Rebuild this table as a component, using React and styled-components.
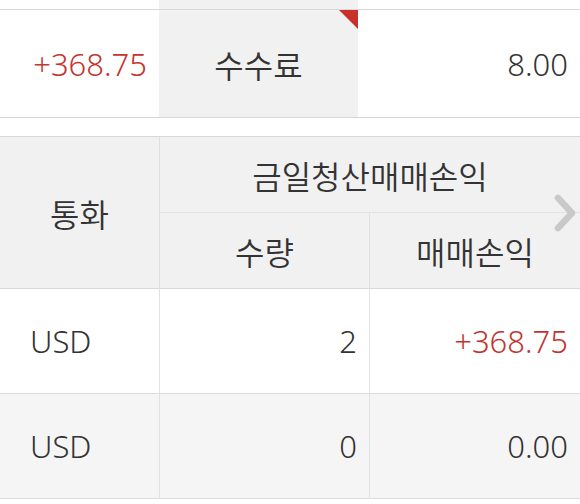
import styled, { createGlobalStyle } from "styled-components";

const Global = createGlobalStyle`
  html, body {
    margin: 0;
    padding: 0;
    background: #ffffff;
  }
  body {
    font-family: "Noto Sans", "Noto Sans CJK KR", sans-serif;
    font-weight: 300;
    color: #333333;
  }
`;

const Page = styled.div`
  width: 580px;
  display: flex;
  flex-direction: column;
`;

const SummaryTable = styled.div`
  display: grid;
  grid-template-columns: 159px 199px 1fr;
`;

const SummaryCell = styled.div`
  position: relative;
  height: ${(p) => p.$h}px;
  background: ${(p) => (p.$label ? "#f1f1f1" : "#ffffff")};
  border-bottom: 1px solid #d8d8d8;
  display: flex;
  align-items: center;
  justify-content: ${(p) => (p.$label ? "center" : "flex-end")};
  padding: 0 12px;
  box-sizing: border-box;
  font-size: ${(p) => (p.$label ? 32 : 31)}px;
  font-weight: ${(p) => (p.$label ? 350 : 300)};
  color: ${(p) => (p.$red ? "#c2352f" : "#333333")};
`;

const Flag = styled.span`
  position: absolute;
  top: 0;
  right: 0;
  width: 0;
  height: 0;
  border-top: 19px solid #c8302a;
  border-left: 19px solid transparent;
`;

const Gap = styled.div`
  height: 18px;
`;

const Table = styled.div`
  position: relative;
  display: grid;
  grid-template-columns: 160px 210px 1fr;
  border-top: 1px solid #d8d8d8;
`;

const HeadCell = styled.div`
  grid-column: ${(p) => p.$col || "auto"};
  grid-row: ${(p) => p.$row || "auto"};
  background: #f1f1f1;
  display: flex;
  align-items: center;
  justify-content: center;
  font-size: 32px;
  font-weight: 350;
  color: #333333;
  box-sizing: border-box;
  height: ${(p) => p.$h}px;
  border-bottom: 1px solid ${(p) => p.$line || "#e2e2e2"};
  border-right: ${(p) => (p.$divide ? "1px solid #e0e0e0" : "none")};
`;

const Cell = styled.div`
  height: 105px;
  box-sizing: border-box;
  display: flex;
  align-items: center;
  justify-content: ${(p) => (p.$left ? "flex-start" : "flex-end")};
  padding: ${(p) => (p.$left ? "0 0 0 30px" : "0 12px 0 0")};
  background: ${(p) => (p.$alt ? "#f5f5f5" : "#ffffff")};
  border-bottom: 1px solid #dcdcdc;
  border-right: ${(p) => (p.$divide ? "1px solid #e2e2e2" : "none")};
  font-size: 31px;
  color: ${(p) => (p.$red ? "#c2352f" : "#333333")};
`;

const Chevron = styled.svg`
  position: absolute;
  right: 1px;
  top: 56px;
`;

const rows = [
  { cur: "USD", qty: "2", pl: "+368.75", red: true },
  { cur: "USD", qty: "0", pl: "0.00", red: false },
];

export default function App() {
  return (
    <Page>
      <Global />
      <SummaryTable>
        <SummaryCell $h={10} />
        <SummaryCell $h={10} $label />
        <SummaryCell $h={10} />
        <SummaryCell $h={108} $red>
          +368.75
        </SummaryCell>
        <SummaryCell $h={108} $label>
          수수료
          <Flag />
        </SummaryCell>
        <SummaryCell $h={108}>8.00</SummaryCell>
      </SummaryTable>
      <Gap />
      <Table>
        <HeadCell $col="1" $row="1 / span 2" $h={152} $divide $line="#d8d8d8">
          통화
        </HeadCell>
        <HeadCell $col="2 / span 2" $row="1" $h={76}>
          금일청산매매손익
        </HeadCell>
        <HeadCell $col="2" $row="2" $h={76} $divide $line="#d8d8d8">
          수량
        </HeadCell>
        <HeadCell $col="3" $row="2" $h={76} $line="#d8d8d8">
          매매손익
        </HeadCell>
        {rows.map((r, i) => (
          <>
            <Cell key={"c" + i} $left $divide $alt={i % 2 === 1}>
              {r.cur}
            </Cell>
            <Cell key={"q" + i} $divide $alt={i % 2 === 1}>
              {r.qty}
            </Cell>
            <Cell key={"p" + i} $red={r.red} $alt={i % 2 === 1}>
              {r.pl}
            </Cell>
          </>
        ))}
        <Chevron width="28" height="40" viewBox="0 0 28 40">
          <path
            d="M7 5 L21 20 L7 35"
            fill="none"
            stroke="#c9c9c9"
            strokeWidth="6.5"
            strokeLinecap="round"
            strokeLinejoin="round"
          />
        </Chevron>
      </Table>
    </Page>
  );
}
